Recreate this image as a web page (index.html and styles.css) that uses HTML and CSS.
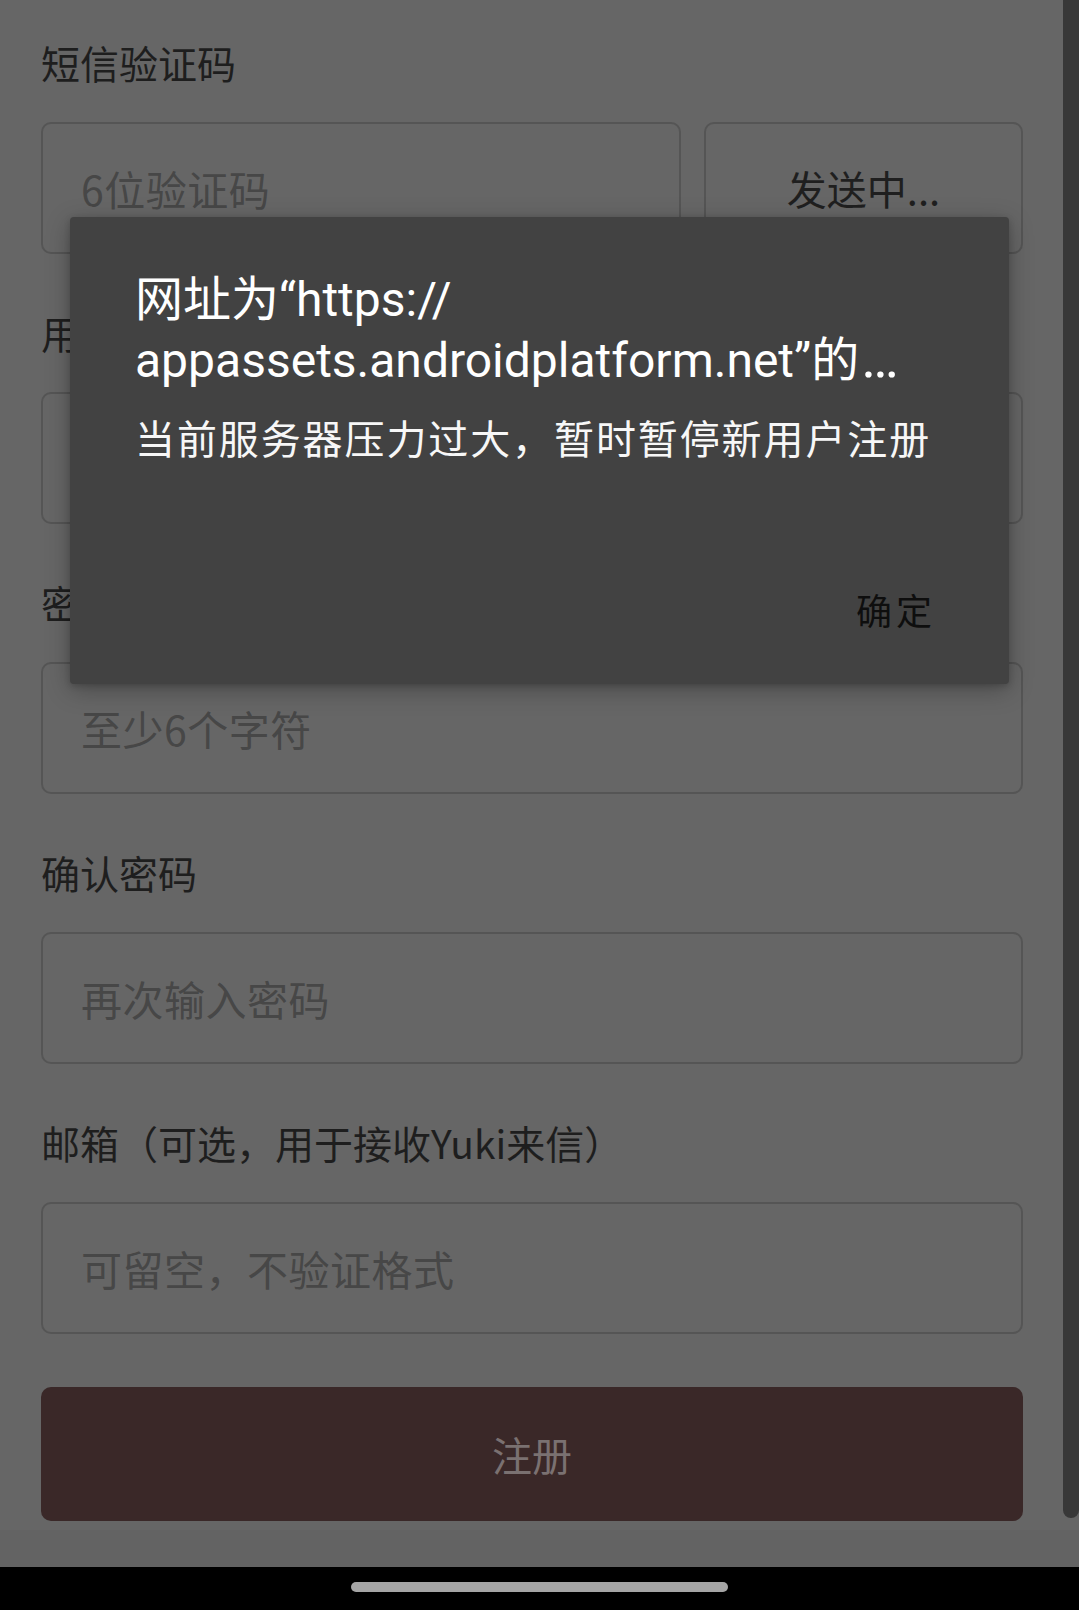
FILE: index.html
```html
<!DOCTYPE html>
<html lang="zh-CN">
<head>
<meta charset="utf-8">
<title>注册</title>
<link rel="stylesheet" href="styles.css">
</head>
<body>
<div class="screen">
  <div class="page">
    <div class="fields">
      <div class="field">
        <div class="label">短信验证码</div>
        <div class="code-row">
          <div class="input"><span class="ph">6位验证码</span></div>
          <div class="input send">发送中...</div>
        </div>
      </div>
      <div class="field">
        <div class="label">用户名</div>
        <div class="input"><span class="ph">3-20个字符</span></div>
      </div>
      <div class="field">
        <div class="label">密码</div>
        <div class="input"><span class="ph">至少6个字符</span></div>
      </div>
      <div class="field">
        <div class="label">确认密码</div>
        <div class="input"><span class="ph">再次输入密码</span></div>
      </div>
      <div class="field">
        <div class="label">邮箱（可选，用于接收Yuki来信）</div>
        <div class="input"><span class="ph">可留空，不验证格式</span></div>
      </div>
    </div>
    <div class="submit">注册</div>
    <div class="page-foot"></div>
  </div>
  <div class="scroll-thumb"></div>
  <div class="dialog">
    <div class="dlg-title">
      <div class="dlg-line">网址为“https://</div>
      <div class="dlg-line">appassets.androidplatform.net”的<span class="ellipsis">…</span></div>
    </div>
    <div class="dlg-msg">当前服务器压力过大，暂时暂停新用户注册</div>
    <div class="dlg-actions"><span class="dlg-btn">确定</span></div>
  </div>
</div>
<div class="navbar"><div class="pill"></div></div>
</body>
</html>
```

FILE: styles.css
```css
* { box-sizing: border-box; }
html, body { margin: 0; padding: 0; }
body {
  width: 1079px;
  height: 1610px;
  background: #000;
  display: flex;
  flex-direction: column;
  font-family: "Noto Sans CJK SC", "Noto Sans", sans-serif;
  overflow: hidden;
}
.screen {
  position: relative;
  height: 1567px;
  background: #666666;
  overflow: hidden;
}
.page {
  padding: 43px 56px 0 41px;
  display: flex;
  flex-direction: column;
}
.fields {
  display: flex;
  flex-direction: column;
  gap: 59px;
}
.field {
  display: flex;
  flex-direction: column;
  gap: 41px;
}
.label {
  font-size: 39px;
  line-height: 38px;
  color: #1e1e1e;
  white-space: nowrap;
}
.code-row {
  display: grid;
  grid-template-columns: 1fr 319px;
  gap: 23px;
}
.input {
  height: 132px;
  border: 2px solid #555555;
  border-radius: 10px;
  display: flex;
  align-items: center;
  padding-left: 38px;
  font-size: 41px;
  line-height: 40px;
  letter-spacing: 0.5px;
}
.ph { color: #474747; }
.send {
  justify-content: center;
  padding-left: 0;
  font-size: 40px;
  letter-spacing: 0;
  color: #1f1f1f;
}
.submit {
  margin-top: 53px;
  height: 134px;
  border-radius: 10px;
  background: #3a2828;
  color: #7a7171;
  font-size: 40px;
  display: flex;
  align-items: center;
  justify-content: center;
}
.page-foot {
  margin-top: 9px;
  height: 40px;
  margin-left: -41px;
  margin-right: -56px;
  background: #636363;
}
.scroll-thumb {
  position: absolute;
  right: 0;
  top: -20px;
  width: 16px;
  height: 1538px;
  background: #383838;
  border-radius: 0 0 8px 8px;
}
.dialog {
  position: absolute;
  left: 70px;
  top: 217px;
  width: 939px;
  height: 467px;
  background: #424242;
  border-radius: 4px;
  box-shadow: 0 6px 24px rgba(0, 0, 0, 0.28), 0 2px 6px rgba(0, 0, 0, 0.18);
  display: flex;
  flex-direction: column;
  padding: 52px 73px 57px 65px;
}
.dlg-title {
  font-family: Roboto, "Noto Sans CJK SC", sans-serif;
  font-size: 48px;
  line-height: 61px;
  color: #ffffff;
}
.dlg-line { white-space: nowrap; }
.ellipsis {
  margin-left: 2px;
  font-size: 56px;
  line-height: 1;
}
.dlg-msg {
  margin-top: 19px;
  font-size: 40px;
  line-height: 54px;
  letter-spacing: 1.9px;
  color: #f7f7f7;
  white-space: nowrap;
}
.dlg-actions {
  margin-top: auto;
  display: flex;
  justify-content: flex-end;
}
.dlg-btn {
  font-size: 36px;
  line-height: 36px;
  letter-spacing: 4px;
  color: #0e0e0e;
}
.navbar {
  height: 43px;
  background: #000;
  display: flex;
  justify-content: center;
  padding-top: 15px;
}
.pill {
  width: 377px;
  height: 10px;
  border-radius: 5px;
  background: #a5a5a5;
}
```
